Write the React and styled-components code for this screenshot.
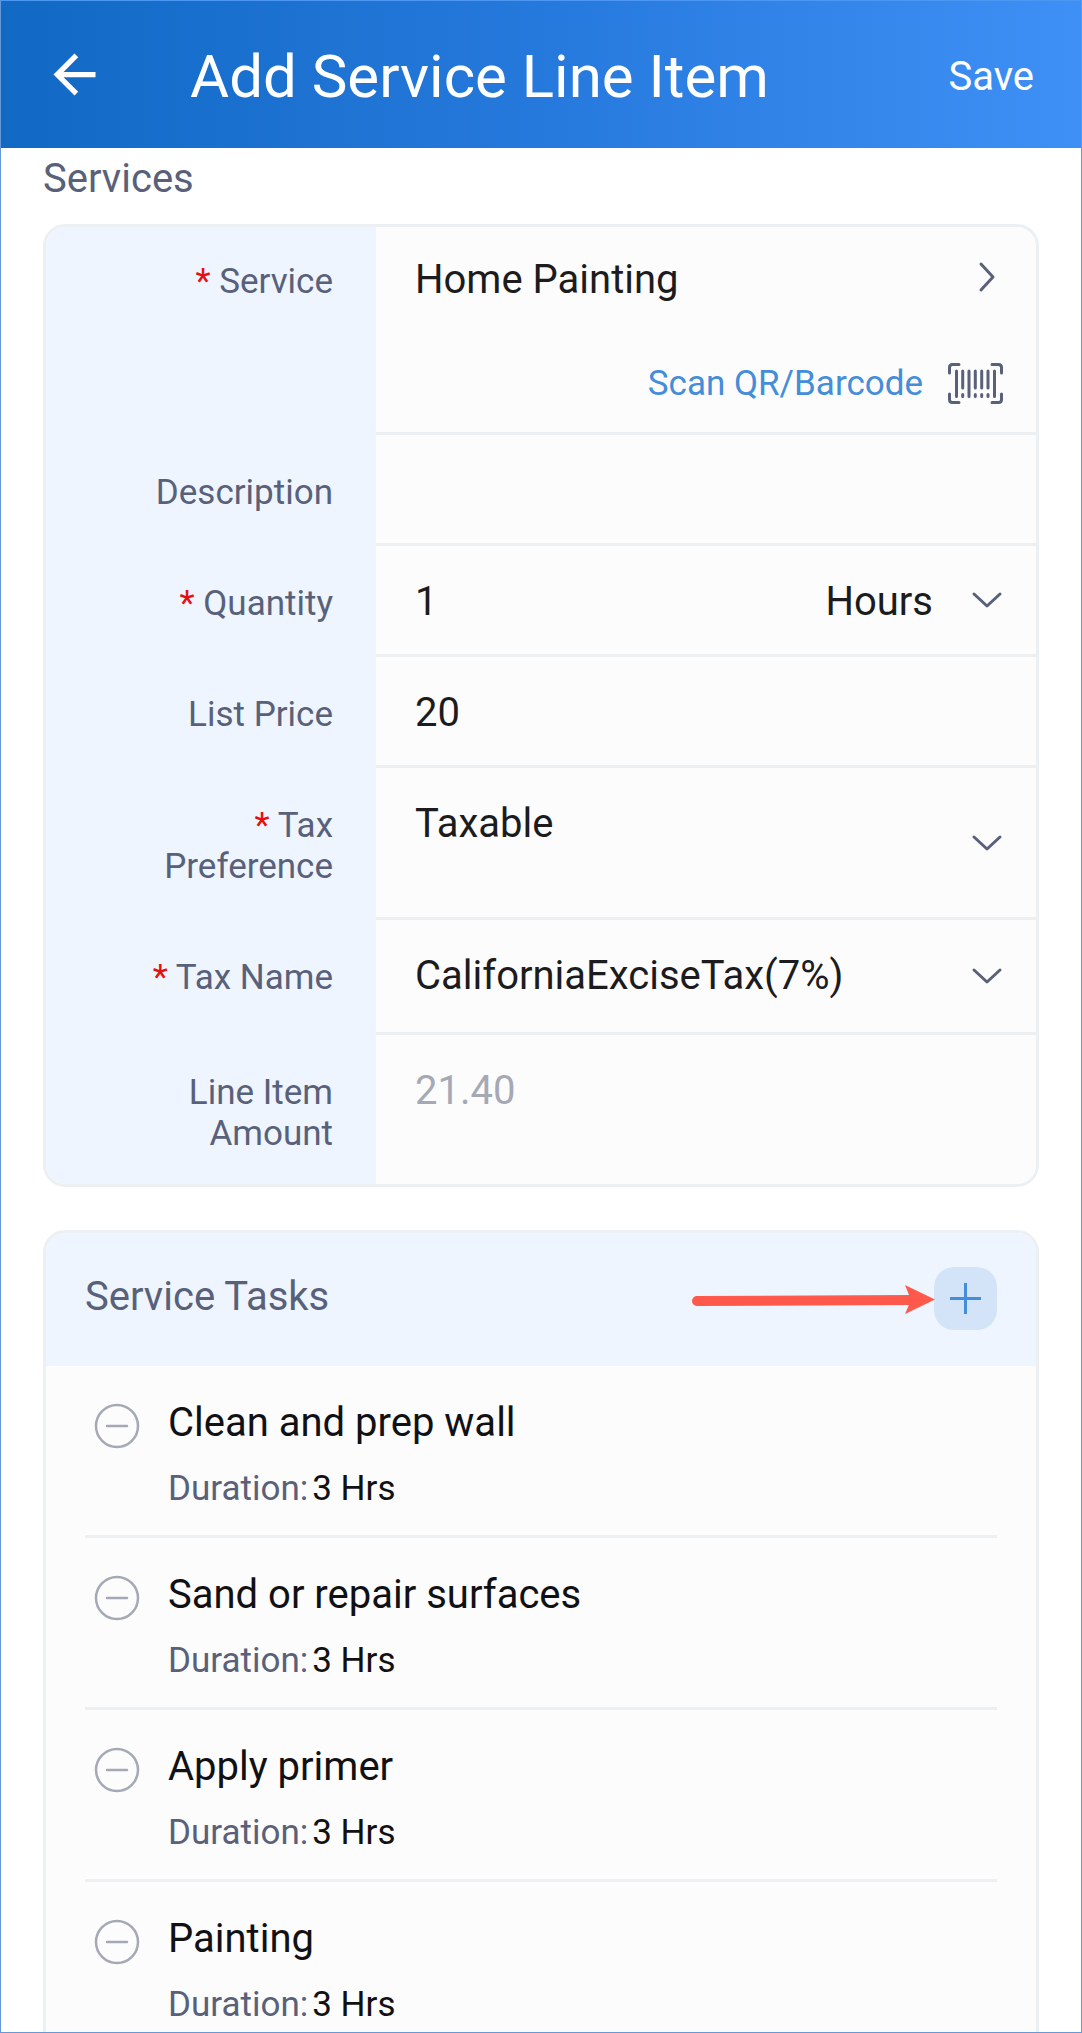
import { useState } from "react";
import styled, { createGlobalStyle } from "styled-components";
import { MdArrowBack } from "react-icons/md";

const INITIAL_TASKS = [
  { id: 1, name: "Clean and prep wall", duration: "3 Hrs" },
  { id: 2, name: "Sand or repair surfaces", duration: "3 Hrs" },
  { id: 3, name: "Apply primer", duration: "3 Hrs" },
  { id: 4, name: "Painting", duration: "3 Hrs" },
];

const ChevronDown = () => (
  <Chevron viewBox="0 0 32 32" aria-hidden="true">
    <path d="M3 10L16 22L29 10" />
  </Chevron>
);

const ChevronRight = () => (
  <Chevron viewBox="0 3 32 32" aria-hidden="true">
    <path d="M10 3L22 16L10 29" />
  </Chevron>
);

const BarcodeIcon = () => (
  <Barcode viewBox="0 0 55 41" aria-hidden="true">
    <path d="M1.5 10V4.500Q1.500 1.500 4.500 1.500H11M44 1.500H50.500Q53.500 1.500 53.500 4.500V10M53.500 31V36.500Q53.500 39.500 50.500 39.500H44M11 39.500H4.500Q1.500 39.500 1.500 36.500V31" />
    <path d="M8.500 8V33.500M21 8V33.500M46.500 8V33.500" />
    <path d="M14.700 8V25M27.300 8V25M33.700 8V25M40 8V25" />
    <path d="M14.700 31.500V33.500M27.300 31.500V33.500M33.700 31.500V33.500M40 31.500V33.500" />
  </Barcode>
);

const Field = ({ label, htmlFor, required, children }) => (
  <Row>
    <Label htmlFor={htmlFor}>
      {required && <Required>* </Required>}
      {label}
    </Label>
    <Value>{children}</Value>
  </Row>
);

const App = () => {
  const [tasks, setTasks] = useState(INITIAL_TASKS);
  const [formData, setFormData] = useState({
    description: "",
    quantity: "1",
    unit: "Hours",
    listPrice: "20",
    taxPreference: "Taxable",
    taxName: "CaliforniaExciseTax(7%)",
  });

  const handleChange = (e) => {
    const { name, value } = e.target;
    setFormData((prevData) => ({
      ...prevData,
      [name]: value,
    }));
  };

  const handleRemove = (id) => {
    setTasks((prevTasks) => prevTasks.filter((task) => task.id !== id));
  };

  const handleAdd = () => {
    setTasks((prevTasks) => [
      ...prevTasks,
      { id: Date.now(), name: "New task", duration: "1 Hrs" },
    ]);
  };

  return (
    <Screen>
      <GlobalStyle />
      <Header>
        <BackButton type="button" aria-label="Back">
          <MdArrowBack size={63} />
        </BackButton>
        <Title>Add Service Line Item</Title>
        <SaveButton type="submit" form="line-item">
          Save
        </SaveButton>
      </Header>

      <Content>
        <SectionTitle>Services</SectionTitle>
        <Card
          as="form"
          id="line-item"
          onSubmit={(e) => e.preventDefault()}
        >
          <Field label="Service" htmlFor="service" required>
            <Stack>
              <ServiceButton type="button" id="service">
                Home Painting
                <ChevronRight />
              </ServiceButton>
              <ScanButton type="button">
                Scan QR/Barcode
                <BarcodeIcon />
              </ScanButton>
            </Stack>
          </Field>
          <Field label="Description" htmlFor="description">
            <Input
              id="description"
              name="description"
              value={formData.description}
              onChange={handleChange}
            />
          </Field>
          <Field label="Quantity" htmlFor="quantity" required>
            <Input
              id="quantity"
              name="quantity"
              inputMode="decimal"
              value={formData.quantity}
              onChange={handleChange}
            />
            <UnitSelect
              name="unit"
              aria-label="Unit"
              value={formData.unit}
              onChange={handleChange}
            >
              <option>Hours</option>
              <option>Days</option>
            </UnitSelect>
            <ChevronDown />
          </Field>
          <Field label="List Price" htmlFor="listPrice">
            <Input
              id="listPrice"
              name="listPrice"
              inputMode="decimal"
              value={formData.listPrice}
              onChange={handleChange}
            />
          </Field>
          <Field label="Tax Preference" htmlFor="taxPreference" required>
            <Select
              id="taxPreference"
              name="taxPreference"
              value={formData.taxPreference}
              onChange={handleChange}
            >
              <option>Taxable</option>
              <option>Non-Taxable</option>
            </Select>
            <ChevronDown />
          </Field>
          <Field label="Tax Name" htmlFor="taxName" required>
            <Select
              id="taxName"
              name="taxName"
              value={formData.taxName}
              onChange={handleChange}
            >
              <option>CaliforniaExciseTax(7%)</option>
            </Select>
            <ChevronDown />
          </Field>
          <Field label="Line Item Amount" htmlFor="amount">
            <Input id="amount" name="amount" value="21.40" disabled readOnly />
          </Field>
        </Card>

        <Card>
          <TasksHeader>
            <TasksTitle>Service Tasks</TasksTitle>
            <AddWrap>
              <Pointer viewBox="0 0 244 30" aria-hidden="true">
                <path
                  d="M6 16L222 15"
                  stroke="#ff594b"
                  strokeWidth="10"
                  strokeLinecap="round"
                />
                <path d="M214 0L244 14.500L214 29L220 15Z" fill="#ff594b" />
              </Pointer>
              <AddButton type="button" aria-label="Add task" onClick={handleAdd}>
                <svg width="31" height="31" viewBox="0 0 31 31">
                  <path d="M15.500 0V31M0 15.500H31" stroke="#448dd9" strokeWidth="3" />
                </svg>
              </AddButton>
            </AddWrap>
          </TasksHeader>
          <TaskList>
            {tasks.map((task) => (
              <Task key={task.id}>
                <RemoveButton
                  type="button"
                  aria-label={`Remove ${task.name}`}
                  onClick={() => handleRemove(task.id)}
                >
                  <svg width="46" height="46" viewBox="0 0 46 46" fill="none">
                    <circle cx="23" cy="23" r="21" stroke="#a5a9b6" strokeWidth="2.500" />
                    <path
                      d="M13 23H33"
                      stroke="#a5a9b6"
                      strokeWidth="2.500"
                      strokeLinecap="round"
                    />
                  </svg>
                </RemoveButton>
                <div>
                  <TaskName>{task.name}</TaskName>
                  <TaskDuration>
                    Duration:<span>{task.duration}</span>
                  </TaskDuration>
                </div>
              </Task>
            ))}
          </TaskList>
        </Card>
      </Content>
    </Screen>
  );
};

const GlobalStyle = createGlobalStyle`
  * {
    box-sizing: border-box;
  }

  body {
    margin: 0;
    background-color: #fff;
    font-family: Roboto, "Liberation Sans", sans-serif;
  }

  button,
  input,
  select {
    margin: 0;
    padding: 0;
    border: none;
    border-radius: 0;
    outline: none;
    background: none;
    font-family: inherit;
  }

  button {
    cursor: pointer;
  }
`;

const Screen = styled.div`
  display: flex;
  flex-direction: column;
  height: 100vh;
  border: 1px solid #6599d8;
  border-top-color: #4b97f2;
  overflow: hidden;
`;

const Header = styled.header`
  display: flex;
  flex-shrink: 0;
  align-items: center;
  height: 147px;
  padding: 4px 47px 0 42px;
  background: linear-gradient(90deg, #1169c4 0%, #2679dc 50%, #3f90f6 100%);
  color: #fff;
`;

const BackButton = styled.button`
  display: flex;
  padding-bottom: 4px;
  color: inherit;
`;

const Title = styled.h1`
  flex: 1;
  margin: 0 0 0 84px;
  font-size: 60px;
  font-weight: 400;
`;

const SaveButton = styled.button`
  font-size: 40px;
  color: inherit;
`;

const Content = styled.main`
  flex: 1;
  min-height: 0;
  padding: 8px 42px 44px;
  overflow-y: auto;
  scrollbar-width: none;
`;

const SectionTitle = styled.h2`
  margin: 0 0 22px;
  font-size: 40px;
  font-weight: 400;
  line-height: 46px;
  color: #59617a;
`;

const Card = styled.section`
  margin-bottom: 43px;
  border: 3px solid #edf0f3;
  border-radius: 22px;
  background-color: #fcfcfc;
  overflow: hidden;
`;

const Value = styled.div`
  display: flex;
  align-items: center;
  min-width: 0;
  padding: 0 33px 0 39px;
  border-bottom: 3px solid #edf0f3;
`;

const Row = styled.div`
  display: grid;
  grid-template-columns: minmax(0, 1fr) minmax(0, 2fr);

  &:last-child ${Value} {
    border-bottom: none;
  }
`;

const Label = styled.label`
  padding: 37px 43px 33px 40px;
  background-color: #eef5ff;
  font-size: 35px;
  line-height: 41px;
  text-align: right;
  color: #59617a;

  ${Row}:first-child & {
    padding-top: 34px;
  }

  ${Row}:last-child & {
    padding-bottom: 30px;
  }
`;

const Required = styled.span`
  color: #e60f0f;
`;

const Input = styled.input`
  flex: 1;
  align-self: flex-start;
  min-width: 0;
  height: 46px;
  margin-top: 32px;
  font-size: 40px;
  color: #1c1c1e;

  &:disabled {
    color: #a5a9b6;
  }
`;

const Select = styled.select`
  flex: 1;
  align-self: flex-start;
  min-width: 0;
  height: 46px;
  margin: 32px 0 34px;
  appearance: none;
  font-size: 40px;
  color: #1c1c1e;
`;

const UnitSelect = styled(Select)`
  flex: none;
  margin: 32px 38px 0 0;
  text-align-last: right;
`;

const Stack = styled.div`
  display: flex;
  flex: 1;
  flex-direction: column;
  gap: 60px;
  padding: 29px 0 28px;
`;

const ServiceButton = styled.button`
  display: flex;
  align-items: center;
  justify-content: space-between;
  font-size: 40px;
  line-height: 47px;
  color: #1c1c1e;
`;

const ScanButton = styled.button`
  display: flex;
  align-items: center;
  align-self: flex-end;
  gap: 25px;
  font-size: 35px;
  line-height: 41px;
  color: #448dd9;
`;

const Chevron = styled.svg`
  flex-shrink: 0;
  width: 32px;
  height: 32px;
  fill: none;
  stroke: #59617a;
  stroke-width: 3;
  stroke-linecap: round;
  stroke-linejoin: round;
  overflow: visible;
  pointer-events: none;
`;

const Barcode = styled.svg`
  width: 55px;
  height: 41px;
  fill: none;
  stroke: #59617a;
  stroke-width: 3;
  stroke-linecap: round;
`;

const TasksHeader = styled.div`
  display: flex;
  justify-content: space-between;
  padding: 34px 39px 36px;
  background-color: #eef5ff;
`;

const TasksTitle = styled.h2`
  margin: 0;
  font-size: 40px;
  font-weight: 400;
  line-height: 60px;
  color: #59617a;
`;

const AddWrap = styled.div`
  position: relative;
`;

const AddButton = styled.button`
  display: flex;
  align-items: center;
  justify-content: center;
  width: 63px;
  height: 63px;
  border-radius: 20px;
  background-color: #d4e4f8;
`;

const Pointer = styled.svg`
  position: absolute;
  top: 18px;
  right: 62px;
  width: 244px;
  height: 30px;
  fill: none;
`;

const TaskList = styled.ul`
  margin: 0;
  padding: 0 39px;
  list-style: none;
`;

const Task = styled.li`
  display: flex;
  align-items: flex-start;
  gap: 28px;
  padding: 34px 0 26px 9px;
  border-bottom: 3px solid #edf0f3;

  &:last-child {
    border-bottom: none;
  }
`;

const RemoveButton = styled.button`
  display: flex;
  padding-top: 3px;
`;

const TaskName = styled.p`
  margin: 0 0 22px;
  font-size: 40px;
  line-height: 46px;
  color: #111114;
`;

const TaskDuration = styled.p`
  margin: 0;
  font-size: 35px;
  line-height: 41px;
  color: #59617a;

  span {
    margin-left: 4px;
    color: #111114;
  }
`;

export default App;
